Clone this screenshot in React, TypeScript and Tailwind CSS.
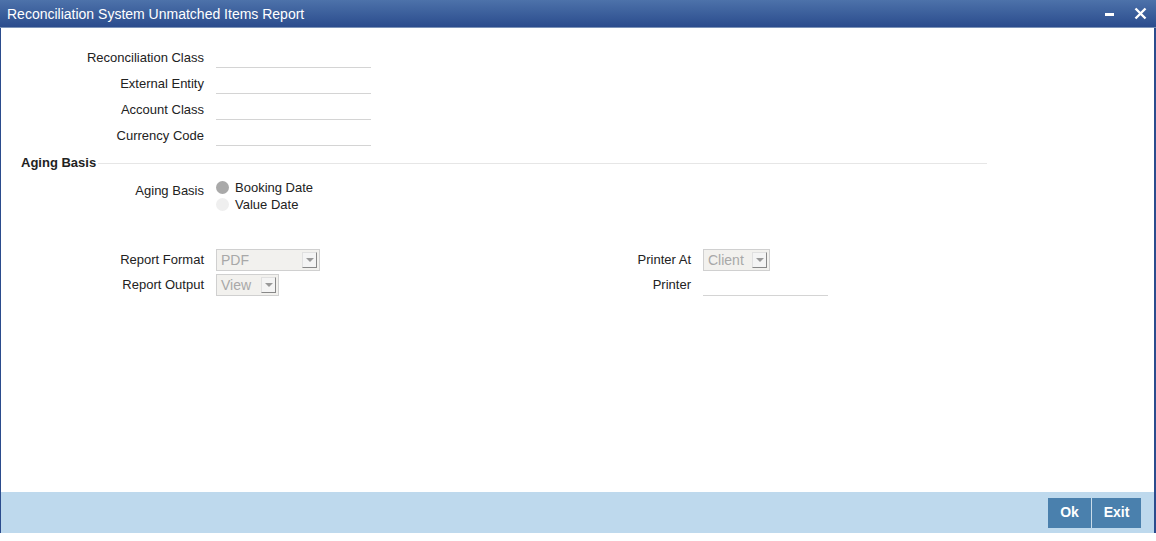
import React from "react";

const Row = ({ label, w = "w-[155px]" }: { label: string; w?: string }) => (
  <div className="flex items-end h-[26px]">
    <div className="w-[203px] text-right pr-0 leading-[18px] pb-[1px]">{label}</div>
    <div className={`ml-[12px] ${w} h-[22px] border-b border-[#d4d4d4]`} />
  </div>
);

const Select = ({ value, w }: { value: string; w: string }) => (
  <div className={`${w} h-[22px] border border-[#d0d0d0] bg-[#f2f1ee] flex items-center justify-between pl-[4px] pr-[2px]`}>
    <span className="text-[#a8a8a8] text-[14px]">{value}</span>
    <div className="w-[15px] h-[16px] bg-[#f4f4f4] border border-[#e0e0e0] border-r-[#888] border-b-[#888] flex items-center justify-center">
      <div className="w-0 h-0 border-l-[4px] border-r-[4px] border-t-[4px] border-l-transparent border-r-transparent border-t-[#999]" />
    </div>
  </div>
);

export default function App() {
  return (
    <div
      className="w-[1156px] h-[541px] bg-white text-[13px] text-[#222] flex flex-col overflow-hidden"
      style={{ fontFamily: '"Liberation Sans", Arial, sans-serif' }}
    >
      <div className="h-[28px] shrink-0 bg-gradient-to-b from-[#4d72aa] to-[#2b4c8d] flex items-center justify-between px-[7px] text-white border-b border-[#7c93b8]">
        <div className="text-[14px] leading-none">Reconciliation System Unmatched Items Report</div>
        <div className="flex items-center gap-[20px] pr-[2px]">
          <div className="w-[9px] h-[3px] bg-white mt-[2px]" />
          <svg width="13" height="13" viewBox="0 0 13 13">
            <path d="M1.5 1.5L11.5 11.5M11.5 1.5L1.5 11.5" stroke="white" strokeWidth="2.4" />
          </svg>
        </div>
      </div>
      <div className="flex-1 flex flex-col border-l border-l-[#2b4c8d] border-r-2 border-r-[#2b4c8d]">
        <div className="flex-1 flex flex-col">
          <div className="pt-[14px] flex flex-col">
            <Row label="Reconciliation Class" />
            <Row label="External Entity" />
            <Row label="Account Class" />
            <Row label="Currency Code" />
          </div>
          <div className="flex items-center mt-[8px] ml-[20px] w-[966px]">
            <div className="font-bold leading-[18px]">Aging Basis</div>
            <div className="flex-1 h-px bg-[#e6e6e6] ml-[2px]" />
          </div>
          <div className="flex mt-[7px]">
            <div className="w-[203px] text-right pt-[3px] leading-[18px]">Aging Basis</div>
            <div className="ml-[12px] flex flex-col">
              <div className="flex items-center h-[17px]">
                <div className="w-[13px] h-[13px] rounded-full bg-[#a9a9a9]" />
                <span className="ml-[6px]">Booking Date</span>
              </div>
              <div className="flex items-center h-[17px]">
                <div className="w-[13px] h-[13px] rounded-full bg-[#efefef]" />
                <span className="ml-[6px]">Value Date</span>
              </div>
            </div>
          </div>
          <div className="flex mt-[36px]">
            <div className="flex flex-col gap-[3px]">
              <div className="flex items-center h-[22px]">
                <div className="w-[203px] text-right">Report Format</div>
                <div className="ml-[12px]"><Select value="PDF" w="w-[104px]" /></div>
              </div>
              <div className="flex items-center h-[22px]">
                <div className="w-[203px] text-right">Report Output</div>
                <div className="ml-[12px]"><Select value="View" w="w-[63px]" /></div>
              </div>
            </div>
            <div className="flex flex-col gap-[3px] ml-[165px]">
              <div className="flex items-center h-[22px]">
                <div className="w-[206px] text-right">Printer At</div>
                <div className="ml-[12px]"><Select value="Client" w="w-[67px]" /></div>
              </div>
              <div className="flex items-end h-[22px]">
                <div className="w-[206px] text-right self-center">Printer</div>
                <div className="ml-[12px] w-[125px] h-[22px] border-b border-[#d4d4d4]" />
              </div>
            </div>
          </div>
        </div>
        <div className="h-[41px] shrink-0 bg-[#bed9ed] flex items-center justify-end pr-[13px]">
          <button className="h-[30px] w-[44px] bg-[#4a80ad] text-white font-bold text-[14px] border-r border-[#c9dcea]">Ok</button>
          <button className="h-[30px] w-[49px] bg-[#4a80ad] text-white font-bold text-[14px]">Exit</button>
        </div>
      </div>
      <div className="h-[8px] shrink-0 bg-white" />
    </div>
  );
}
